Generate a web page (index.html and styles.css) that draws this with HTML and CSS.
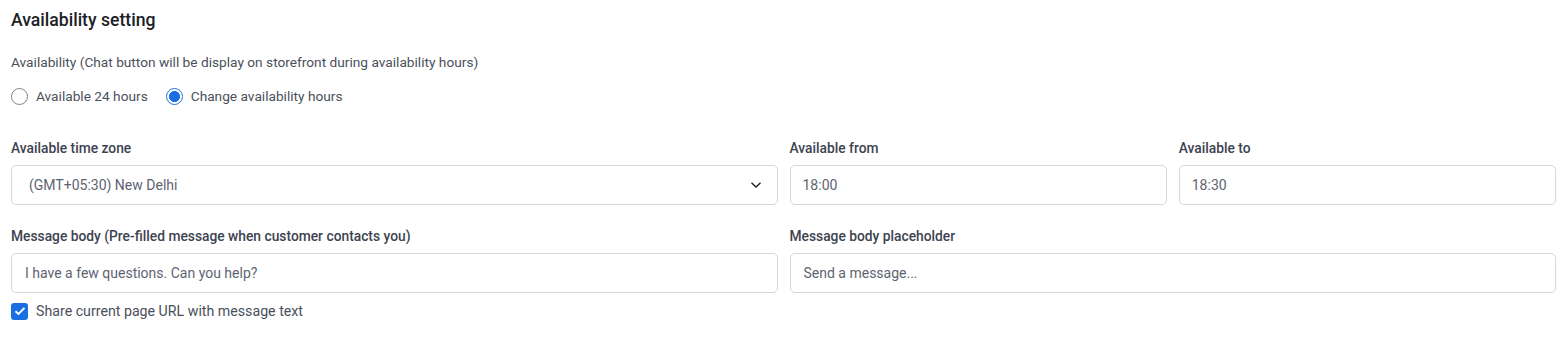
FILE: index.html
```html
<!DOCTYPE html>
<html lang="en">
<head>
  <meta charset="UTF-8">
  <title>Availability setting</title>
  <link rel="stylesheet" href="styles.css">
</head>
<body>
  <div class="avail-wrap">
    <h2 class="avail-title">Availability setting</h2>
    <div class="avail-desc">Availability (Chat button will be display on storefront during availability hours)</div>
    <div class="avail-radios">
      <label class="avail-option">
        <span class="radio"></span>
        Available 24 hours
      </label>
      <label class="avail-option">
        <span class="radio checked"></span>
        Change availability hours
      </label>
    </div>

    <!-- Time zone + hours -->
    <div class="avail-grid first">
      <div class="field">
        <div class="field-label">Available time zone</div>
        <div class="field-box select-box">
          <span>(GMT+05:30) New Delhi</span>
          <svg class="chev" width="12" height="8" viewBox="0 0 12 8"><path d="M1.5 1.8 L6 6 L10.5 1.8" fill="none" stroke="#222" stroke-width="1.4"/></svg>
        </div>
      </div>
      <div class="avail-pair">
        <div class="field">
          <div class="field-label">Available from</div>
          <div class="field-box time-box">18:00</div>
        </div>
        <div class="field">
          <div class="field-label">Available to</div>
          <div class="field-box time-box">18:30</div>
        </div>
      </div>
    </div>

    <!-- Message -->
    <div class="avail-grid second">
      <div class="field">
        <div class="field-label">Message body (Pre-filled message when customer contacts you)</div>
        <div class="field-box text-box">I have a few questions. Can you help?</div>
      </div>
      <div class="field">
        <div class="field-label">Message body placeholder</div>
        <div class="field-box text-box">Send a message...</div>
      </div>
    </div>

    <label class="avail-check">
      <span class="checkbox">
        <svg width="12" height="10" viewBox="0 0 12 10"><path d="M1.5 5.2 L4.5 8 L10.5 1.8" fill="none" stroke="#fff" stroke-width="1.9"/></svg>
      </span>
      Share current page URL with message text
    </label>
  </div>
</body>
</html>
```

FILE: styles.css
```css
body { margin: 0; background: #fff; }
.avail-wrap {
  font-family: 'Roboto', 'Liberation Sans', sans-serif;
  padding: 8px 9px 0 11px;
  color: #3f4550;
}
.avail-title {
  margin: 0;
  font-size: 17.6px;
  line-height: 24px;
  font-weight: 500;
  color: #1c2127;
}
.avail-desc {
  margin-top: 20px;
  font-size: 13.7px;
  line-height: 20px;
  color: #4a505a;
}
.avail-radios {
  display: flex;
  gap: 18px;
  margin-top: 14px;
  height: 20px;
  align-items: center;
}
.avail-option {
  display: flex;
  align-items: center;
  gap: 8px;
  font-size: 13.7px;
  color: #4a505a;
}
.radio {
  width: 15px;
  height: 15px;
  border: 1px solid #80858d;
  border-radius: 50%;
  box-sizing: content-box;
  display: inline-block;
}
.radio.checked {
  border-color: #1a6fe3;
  background: radial-gradient(circle, #1a6fe3 0 5.2px, #fff 5.8px);
}
.avail-grid {
  display: grid;
  grid-template-columns: 1fr 1fr;
  gap: 12px;
}
.avail-grid.first { margin-top: 33px; }
.avail-grid.second { margin-top: 22px; }
.avail-pair {
  display: grid;
  grid-template-columns: 1fr 1fr;
  gap: 12px;
}
.field-label {
  font-size: 13.8px;
  line-height: 18px;
  font-weight: 500;
  color: #3d4350;
  margin-bottom: 8px;
}
.field-box {
  height: 40px;
  box-sizing: border-box;
  border: 1px solid #d6d7da;
  border-radius: 5px;
  display: flex;
  align-items: center;
  font-size: 14px;
  color: #5d6471;
}
.select-box {
  padding: 0 15px 0 17px;
  justify-content: space-between;
}
.time-box { padding: 0 12px; }
.text-box { padding: 0 13px; }
.avail-check {
  display: flex;
  align-items: center;
  gap: 8px;
  margin-top: 8px;
  height: 20px;
  font-size: 14.2px;
  color: #4a505a;
}
.checkbox {
  width: 17px;
  height: 17px;
  border-radius: 3px;
  background: #1a6fe3;
  display: inline-flex;
  align-items: center;
  justify-content: center;
}
```
